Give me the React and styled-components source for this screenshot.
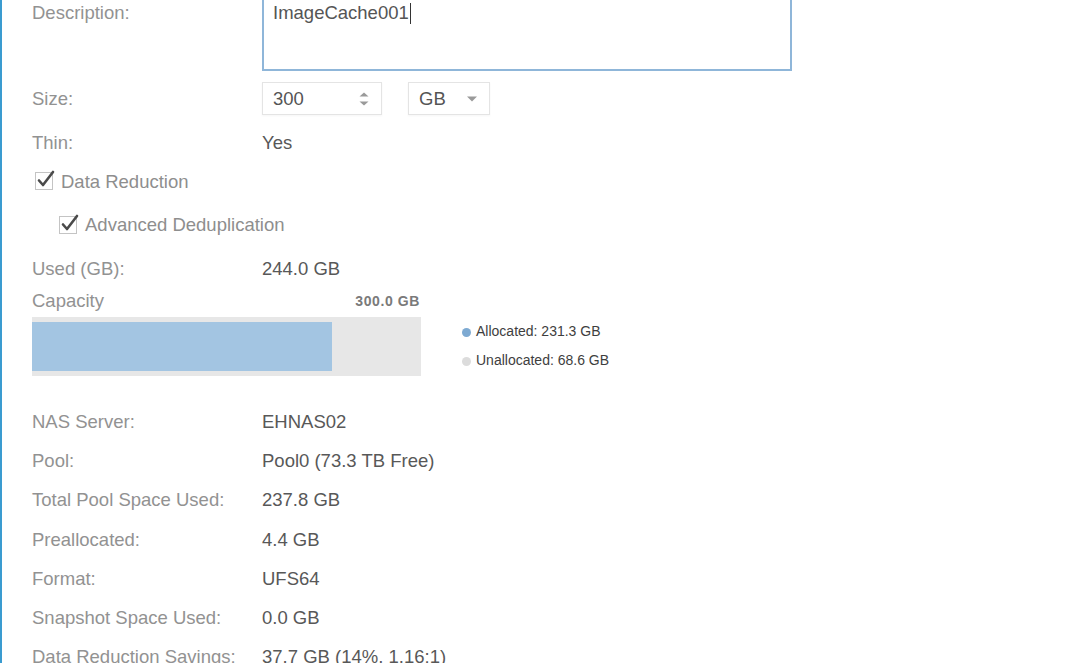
import React from 'react'
import styled, { createGlobalStyle } from 'styled-components'

const GlobalStyle = createGlobalStyle`
  html, body {
    margin: 0;
    padding: 0;
    background: #fff;
    overflow: hidden;
  }
  body {
    font-family: 'Liberation Sans', Arial, sans-serif;
  }
`

const allocated = 231.3
const total = 300

const App = () => {
  const fillPct = (allocated / total) * 100

  return (
    <>
      <GlobalStyle />
      <Panel>
        <Form>
          <Row height={76} align="flex-start">
            <Label top>Description:</Label>
            <TextBox>
              ImageCache001
              <Caret />
            </TextBox>
          </Row>

          <Row height={33} spaceTop={11}>
            <Label>Size:</Label>
            <Controls>
              <NumberBox>
                <span>300</span>
                <Spinner>
                  <svg width="12" height="16" viewBox="0 0 12 16">
                    <path d="M1.5 5.5 L6 1.5 L10.5 5.5 Z" fill="#9a9a9a" />
                    <path d="M1.5 10.5 L6 14.5 L10.5 10.5 Z" fill="#9a9a9a" />
                  </svg>
                </Spinner>
              </NumberBox>
              <SelectBox>
                <span>GB</span>
                <svg width="12" height="8" viewBox="0 0 12 8">
                  <path d="M1 1.5 L11 1.5 L6 6.5 Z" fill="#9a9a9a" />
                </svg>
              </SelectBox>
            </Controls>
          </Row>

          <Row height={39} spaceTop={8}>
            <Label>Thin:</Label>
            <Value>Yes</Value>
          </Row>

          <Row height={39}>
            <Check label="Data Reduction" indent={0} />
          </Row>

          <Row height={48}>
            <Check label="Advanced Deduplication" indent={24} />
          </Row>

          <Row height={40}>
            <Label>Used (GB):</Label>
            <Value>244.0 GB</Value>
          </Row>

          <CapacityBlock>
            <CapacityHead>
              <Label>Capacity</Label>
              <TotalTag>300.0 GB</TotalTag>
            </CapacityHead>
            <BarWrap>
              <Bar>
                <BarFill style={{ width: `${fillPct}%` }} />
              </Bar>
              <Legend>
                <LegendItem>
                  <Dot color="#7eaad2" />
                  Allocated: 231.3 GB
                </LegendItem>
                <LegendItem>
                  <Dot color="#dcdcdc" />
                  Unallocated: 68.6 GB
                </LegendItem>
              </Legend>
            </BarWrap>
          </CapacityBlock>

          <Details>
            <Row height={39.3}>
              <Label>NAS Server:</Label>
              <Value>EHNAS02</Value>
            </Row>
            <Row height={39.3}>
              <Label>Pool:</Label>
              <Value>Pool0 (73.3 TB Free)</Value>
            </Row>
            <Row height={39.3}>
              <Label>Total Pool Space Used:</Label>
              <Value>237.8 GB</Value>
            </Row>
            <Row height={39.3}>
              <Label>Preallocated:</Label>
              <Value>4.4 GB</Value>
            </Row>
            <Row height={39.3}>
              <Label>Format:</Label>
              <Value>UFS64</Value>
            </Row>
            <Row height={39.3}>
              <Label>Snapshot Space Used:</Label>
              <Value>0.0 GB</Value>
            </Row>
            <Row height={39.3}>
              <Label>Data Reduction Savings:</Label>
              <Value>37.7 GB (14%, 1.16:1)</Value>
            </Row>
          </Details>
        </Form>
      </Panel>
    </>
  )
}

const Check = ({ label, indent }) => (
  <CheckLabel indent={indent}>
    <svg width="22" height="22" viewBox="0 0 22 22">
      <rect x="1.5" y="3.5" width="17" height="17" fill="#fff" stroke="#c4c4c4" />
      <path
        d="M5 11.5 L9 16 L19 3"
        fill="none"
        stroke="#4a4a4a"
        strokeWidth="2.6"
        strokeLinecap="round"
        strokeLinejoin="round"
      />
    </svg>
    {label}
  </CheckLabel>
)

export default App

const Panel = styled.div`
  width: 1067px;
  height: 663px;
  border-left: 2px solid #3a9bd0;
  box-sizing: border-box;
  background: #fff;
  overflow: hidden;
`

const Form = styled.div`
  margin-top: -5px;
  padding-left: 30px;
  display: flex;
  flex-direction: column;
`

const Row = styled.div`
  display: flex;
  align-items: ${({ align }) => align || 'center'};
  height: ${({ height }) => height}px;
  margin-top: ${({ spaceTop }) => spaceTop || 0}px;
  font-size: 18.5px;
`

const Label = styled.div`
  width: 230px;
  flex: none;
  color: #929292;
  font-size: 18.5px;
  line-height: 20px;
  padding-top: ${({ top }) => (top ? '8px' : '0')};
`

const Value = styled.div`
  color: #585858;
  font-size: 18.5px;
  line-height: 20px;
`

const TextBox = styled.div`
  width: 530px;
  height: 76px;
  box-sizing: border-box;
  border: 2px solid #8fb6d9;
  padding: 6px 9px;
  font-size: 18.5px;
  line-height: 20px;
  color: #555;
  display: flex;
  align-items: flex-start;
`

const Caret = styled.span`
  display: inline-block;
  width: 1px;
  height: 21px;
  margin-left: 1px;
  background: #333;
`

const Controls = styled.div`
  display: flex;
  gap: 26px;
`

const InputShell = styled.div`
  height: 33px;
  box-sizing: border-box;
  border: 1px solid #e4e4e4;
  box-shadow: 0 1px 2px rgba(0, 0, 0, 0.04);
  display: flex;
  align-items: center;
  justify-content: space-between;
  padding: 0 10px;
  color: #555;
  font-size: 18.5px;
`

const NumberBox = styled(InputShell)`
  width: 120px;
`

const Spinner = styled.div`
  display: flex;
  align-items: center;
  margin-right: 1px;
`

const SelectBox = styled(InputShell)`
  width: 82px;
  padding-right: 11px;
`

const CheckLabel = styled.label`
  display: flex;
  align-items: center;
  gap: 5px;
  margin-left: ${({ indent }) => indent + 2}px;
  color: #8e8e8e;
  font-size: 18.5px;
  svg {
    margin-top: -3px;
  }
`

const CapacityBlock = styled.div`
  display: flex;
  flex-direction: column;
`

const CapacityHead = styled.div`
  width: 388px;
  height: 24px;
  display: flex;
  align-items: center;
  justify-content: space-between;
`

const TotalTag = styled.span`
  color: #7a7a7a;
  font-size: 14px;
  font-weight: bold;
  letter-spacing: 0.6px;
`

const BarWrap = styled.div`
  margin-top: 4px;
  display: flex;
  align-items: flex-start;
  gap: 41px;
`

const Bar = styled.div`
  width: 389px;
  height: 59px;
  background: #e7e7e7;
  padding: 5px 0;
  box-sizing: border-box;
  display: flex;
`

const BarFill = styled.div`
  height: 100%;
  background: #a3c5e2;
`

const Legend = styled.div`
  display: flex;
  flex-direction: column;
  gap: 11px;
  margin-top: 5px;
`

const LegendItem = styled.div`
  display: flex;
  align-items: center;
  gap: 5px;
  color: #3e3e3e;
  font-size: 14px;
  line-height: 18px;
`

const Dot = styled.span`
  width: 9px;
  height: 9px;
  border-radius: 50%;
  background: ${({ color }) => color};
  display: inline-block;
  margin-top: 3px;
`

const Details = styled.div`
  margin-top: 26px;
  display: flex;
  flex-direction: column;
`
